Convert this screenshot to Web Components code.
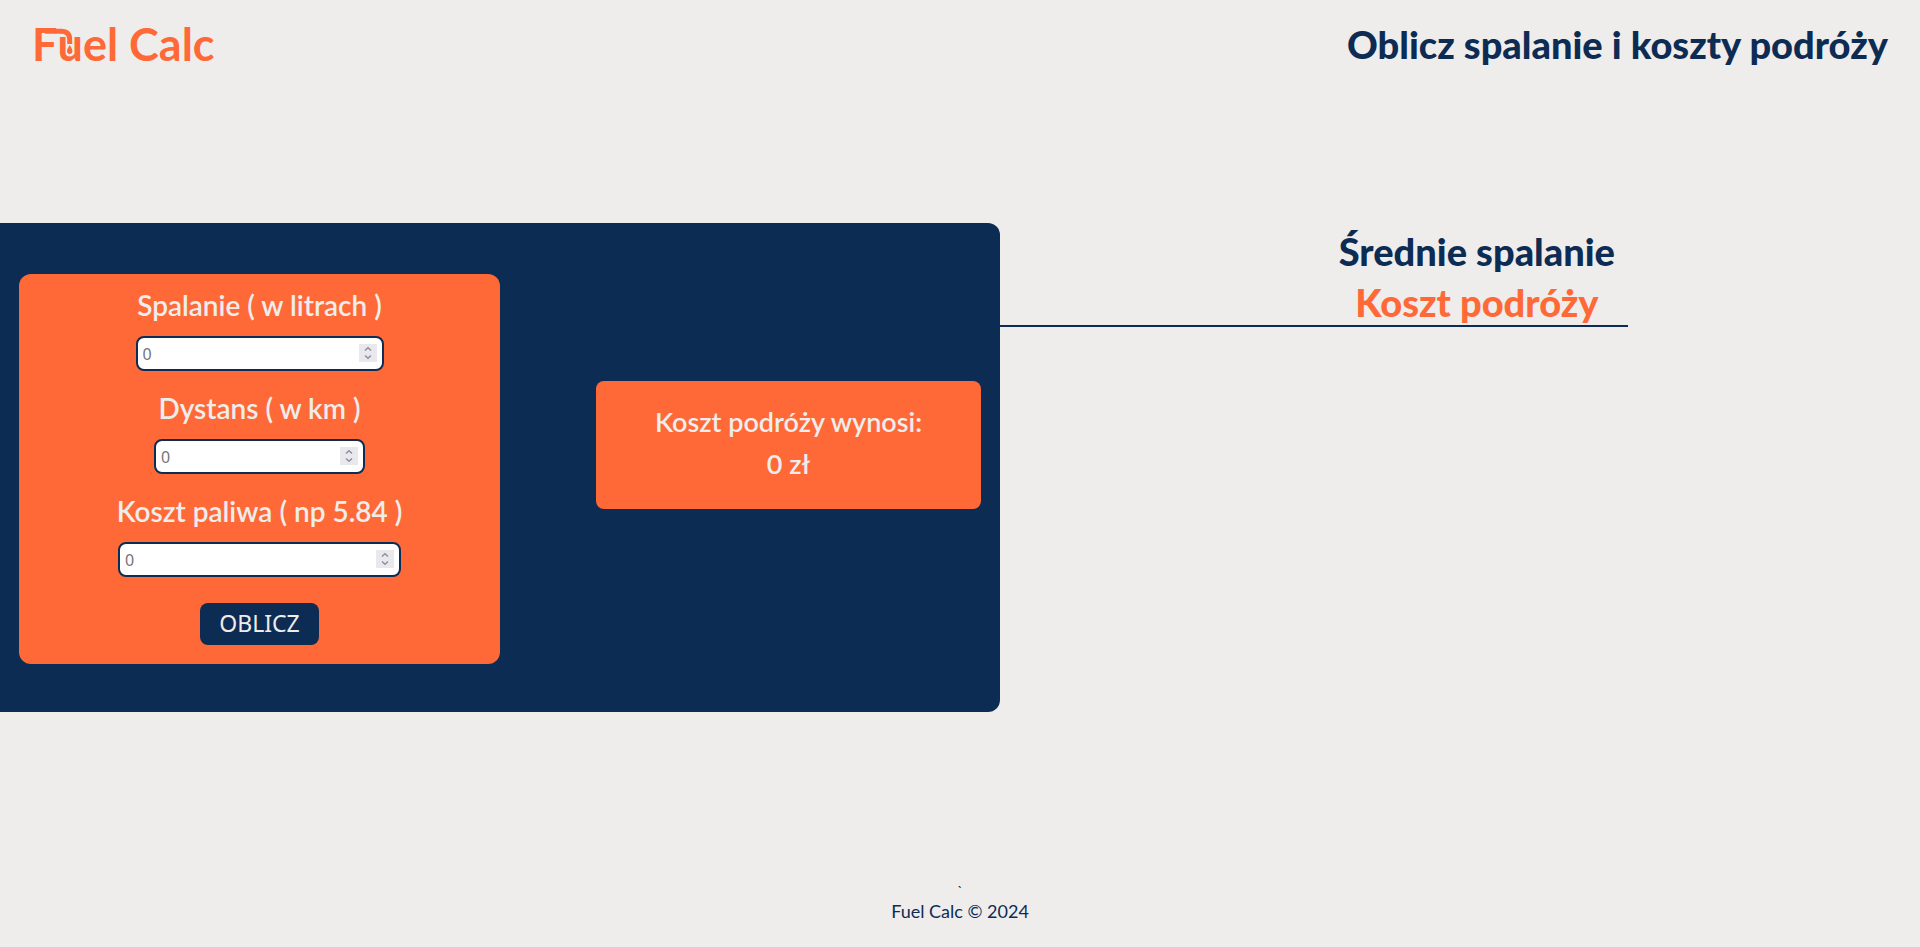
<!DOCTYPE html>
<html lang="pl">
<head>
<meta charset="utf-8">
<meta name="viewport" content="width=device-width, initial-scale=1">
<title>Fuel Calc</title>
<style>
  :root { --navy: #0d2c54; --orange: #ff6937; --paper: #efedeb; }
  body { margin: 0; background: var(--paper); color: var(--navy); font-family: Lato, "Open Sans", sans-serif; }
</style>
</head>
<body>
<fuel-app></fuel-app>
<script>
const define = (name, html, setup) => {
  const template = document.createElement('template');
  template.innerHTML = '<style>*{box-sizing:border-box}</style>' + html;
  customElements.define(name, class extends HTMLElement {
    constructor() {
      super();
      this.attachShadow({ mode: 'open' }).append(template.content.cloneNode(true));
    }
    connectedCallback() { if (setup) setup(this, this.shadowRoot); }
  });
};

define('fuel-logo', `
  <style>
    :host { display: block; }
    a { display: block; color: var(--orange); text-decoration: none; font-size: 45px; line-height: 52px; font-weight: 700; white-space: nowrap; }
    span { position: relative; display: inline-block; }
    svg { position: absolute; left: -22px; top: 0; width: 50px; height: 52px; }
    .hose { fill: none; stroke: var(--orange); stroke-width: 5; }
    .gap { fill: var(--paper); }
    .drop { fill: var(--orange); }
  </style>
  <a href="#">F<span>u<svg viewBox="0 0 50 52" aria-hidden="true">
      <path class="hose" d="M10 13.3H26Q34.7 13.3 34.7 21.5V27"/>
      <path class="gap" d="M31 26H38.5V34A3.7 4 0 0 1 31 34Z"/>
      <path class="drop" d="M34.7 27C33 30 32 31 32 33A2.7 3 0 0 0 37.4 33C37.4 31 36.6 30 34.7 27Z"/>
    </svg></span>el Calc</a>`);

define('fuel-header', `
  <style>
    :host { display: block; }
    header { display: flex; justify-content: space-between; align-items: center; padding: 18px 32px 22px; }
    h1 { margin: 0; font-size: 38px; line-height: 52px; font-weight: 900; }
  </style>
  <header><fuel-logo></fuel-logo><h1>Oblicz spalanie i koszty podróży</h1></header>`);

define('fuel-field', `
  <style>
    :host { display: flex; flex-direction: column; align-items: center; }
    label { font-size: 28px; line-height: 32px; font-weight: 600; color: var(--paper); white-space: nowrap; }
    .box { position: relative; width: var(--field-width, 248px); max-width: 100%; margin-top: 15px; }
    input { display: block; width: 100%; height: 35px; padding: 0 36px 0 5px; border: 2px solid var(--navy); border-radius: 8px; background: #fff; color: var(--navy); font: 16px "Noto Sans", sans-serif; appearance: textfield; }
    input::-webkit-inner-spin-button { appearance: none; }
    input::placeholder { color: #757575; }
    .box svg { position: absolute; right: 7px; top: 8px; width: 18px; height: 18px; pointer-events: none; }
  </style>
  <label for="value"><slot></slot></label>
  <div class="box">
    <input id="value" type="number" placeholder="0">
    <svg viewBox="0 0 18 18" aria-hidden="true"><path d="M0 0H18V18H0Z" fill="#e9e9ed"/><path d="M6 6.5L9 3.8L12 6.5M6 11.5L9 14.2L12 11.5" fill="none" stroke="#8f8f9d" stroke-width="1.5"/></svg>
  </div>`, (host, root) => {
    root.querySelector('input').setAttribute('aria-label', host.textContent);
  });

define('fuel-form', `
  <style>
    :host { display: block; }
    form { display: flex; flex-direction: column; align-items: center; gap: 21px; padding: 15px 16px 19px; border-radius: 12px; background: var(--orange); }
    .s { --field-width: 248px; } .d { --field-width: 211px; } .k { --field-width: 283px; }
    button { margin-top: 5px; width: 119px; height: 42px; padding: 0 0 2px; border: 0; border-radius: 8px; background: var(--navy); color: var(--paper); font: 23px "Noto Sans", sans-serif; cursor: pointer; }
  </style>
  <form>
    <fuel-field class="s">Spalanie ( w litrach )</fuel-field>
    <fuel-field class="d">Dystans ( w km )</fuel-field>
    <fuel-field class="k">Koszt paliwa ( np 5.84 )</fuel-field>
    <button type="button">OBLICZ</button>
  </form>`, (host, root) => {
    root.querySelector('button').addEventListener('click', () => {
      const [use, distance, price] = [...root.querySelectorAll('fuel-field')].map(f => Number(f.shadowRoot.querySelector('input').value));
      const cost = Math.round(use * distance * price) / 100;
      host.dispatchEvent(new CustomEvent('cost', { detail: cost, bubbles: true, composed: true }));
    });
  });

define('fuel-result', `
  <style>
    :host { display: block; border-radius: 8px; background: var(--orange); color: var(--paper); }
    div { padding: 20px 16px 24px; text-align: center; font-size: 27px; line-height: 42px; font-weight: 600; }
    p { margin: 0; }
  </style>
  <div><p>Koszt podróży wynosi:</p><p><slot></slot></p></div>`);

define('fuel-panel', `
  <style>
    :host { display: flex; justify-content: space-between; align-items: flex-start; padding: 51px 19px 48px; border-radius: 0 12px 12px 0; background: var(--navy); }
    fuel-form { flex: 0 1 481px; }
    fuel-result { flex: 0 1 385px; margin-top: 107px; }
  </style>
  <fuel-form></fuel-form><fuel-result>0 zł</fuel-result>`, (host, root) => {
    root.addEventListener('cost', e => { root.querySelector('fuel-result').textContent = e.detail + ' zł'; });
  });

define('fuel-modes', `
  <style>
    :host { display: flex; justify-content: flex-end; border-bottom: 2px solid var(--navy); }
    div { padding: 0 13px; text-align: center; }
    h2 { margin: 0; font-size: 38px; line-height: 46px; font-weight: 900; white-space: nowrap; }
    div { display: grid; gap: 5px; padding-top: 5px; }
    .cost { color: var(--orange); }
  </style>
  <div><h2>Średnie spalanie</h2><h2 class="cost">Koszt podróży</h2></div>`);

define('fuel-footer', `
  <style>
    :host { display: block; }
    footer { padding-bottom: 25px; text-align: center; font-size: 18px; line-height: 22px; }
    p { margin: 0; }
    .mark { font-size: 14px; line-height: 18px; }
  </style>
  <footer><p class="mark">\`</p><p>Fuel Calc © 2024</p></footer>`);

define('fuel-app', `
  <style>
    :host { display: flex; flex-direction: column; min-height: 100vh; }
    main { flex: 1; display: grid; grid-template-columns: minmax(0, 1000px) minmax(0, 628px); align-items: start; padding-top: 131px; }
  </style>
  <fuel-header></fuel-header>
  <main><fuel-panel></fuel-panel><fuel-modes></fuel-modes></main>
  <fuel-footer></fuel-footer>`);
</script>
</body>
</html>
